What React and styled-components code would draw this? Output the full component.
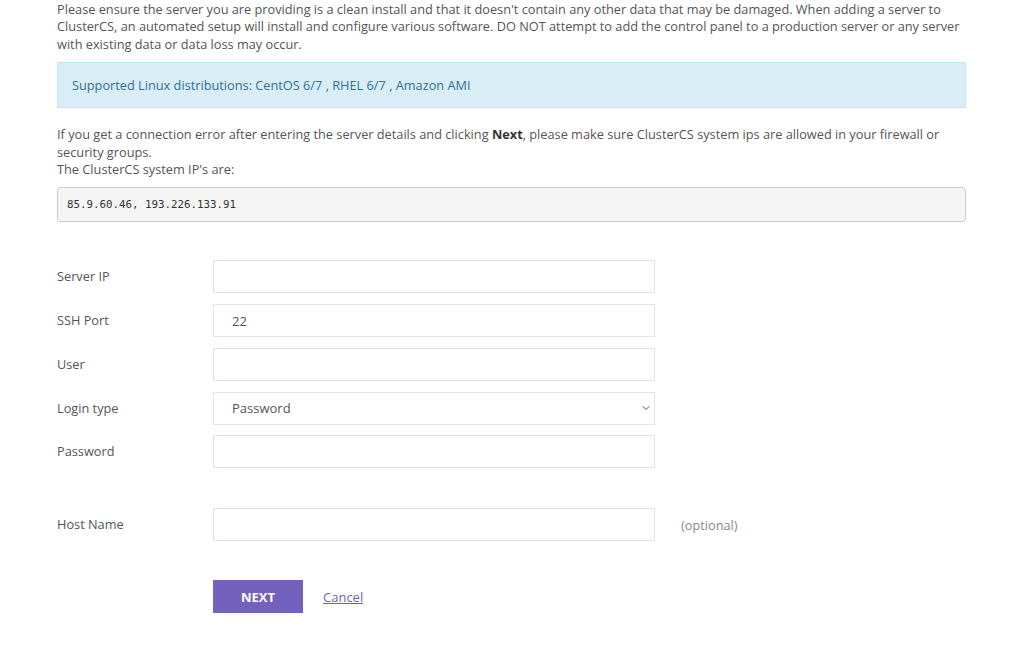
import React from 'react'
import styled, { createGlobalStyle } from 'styled-components'
import { ChevronDown } from 'lucide-react'

const Global = createGlobalStyle`
	body {
		margin: 0;
		background: #fff;
		font-family: "Open Sans", "Liberation Sans", sans-serif;
		font-size: 12.75px;
		color: #555;
	}
`

const Page = styled.div`
	width: 909px;
	padding: 0 0 0 57px;
`

const Text = styled.p`
	margin: 0 0 ${props => props.mb || 0}px 0;
	line-height: 17.4px;
	padding-top: ${props => props.pt || 0}px;
	b {
		color: #333;
		font-weight: 700;
	}
`

const Alert = styled.div`
	box-sizing: border-box;
	height: 46px;
	padding: 0 14px;
	display: flex;
	align-items: center;
	background: #d9edf7;
	border: 1px solid #bce8f1;
	color: #31708f;
	margin-bottom: 18px;
`

const Pre = styled.pre`
	box-sizing: border-box;
	height: 35px;
	margin: 0 0 38px 0;
	padding: 0 9px;
	display: flex;
	align-items: center;
	background: #f5f5f5;
	border: 1px solid #ccc;
	border-radius: 4px;
	font-family: "DejaVu Sans Mono", "Liberation Mono", monospace;
	font-size: 10.8px;
	color: #333;
`

const Form = styled.form`
	display: flex;
	flex-direction: column;
	gap: 10.75px;
`

const Row = styled.div`
	display: flex;
	align-items: center;
	margin-top: ${props => props.mt || 0}px;
`

const Label = styled.label`
	width: 156px;
	flex-shrink: 0;
	color: #555;
	margin-top: -1px;
`

const Input = styled.input`
	box-sizing: border-box;
	width: 442px;
	height: 33px;
	padding: 0 18px;
	border: 1px solid #e3e3ef;
	border-radius: 0;
	font-family: inherit;
	font-size: 13px;
	color: #555;
	outline: none;
`

const SelectWrap = styled.div`
	position: relative;
	width: 442px;
	height: 33px;
`

const Select = styled.select`
	box-sizing: border-box;
	width: 100%;
	height: 33px;
	padding: 0 18px;
	appearance: none;
	background: #fff;
	border: 1px solid #e3e3ef;
	border-radius: 0;
	font-family: inherit;
	font-size: 13px;
	color: #555;
	outline: none;
`

const Chevron = styled(ChevronDown)`
	position: absolute;
	right: 3px;
	top: 10px;
	pointer-events: none;
	color: #555;
`

const Hint = styled.span`
	margin-left: 26px;
	color: #888;
`

const Actions = styled.div`
	display: flex;
	align-items: center;
	gap: 20px;
	margin: 39px 0 0 156px;
`

const Button = styled.button`
	width: 90px;
	height: 33px;
	border: none;
	border-radius: 0;
	background: #7461bd;
	color: #fff;
	font-family: inherit;
	font-weight: 700;
	font-size: 13px;
`

const Cancel = styled.a`
	color: #6f5fc0;
	text-decoration: underline;
	font-size: 13px;
	cursor: pointer;
`

export default function App() {
	return (
		<Page>
			<Global />
			<Text mb={9} pt={1}>
				Please ensure the server you are providing is a clean install and that it doesn't contain any other data that may be damaged. When adding a server to ClusterCS, an automated setup will install and configure various software. DO NOT attempt to add the control panel to a production server or any server with existing data or data loss may occur.
			</Text>
			<Alert>Supported Linux distributions: CentOS 6/7 , RHEL 6/7 , Amazon AMI</Alert>
			<Text mb={9}>
				If you get a connection error after entering the server details and clicking <b>Next</b>, please make sure ClusterCS system ips are allowed in your firewall or security groups.<br />
				The ClusterCS system IP's are:
			</Text>
			<Pre>85.9.60.46, 193.226.133.91</Pre>
			<Form onSubmit={e => e.preventDefault()}>
				<Row>
					<Label>Server IP</Label>
					<Input type="text" />
				</Row>
				<Row>
					<Label>SSH Port</Label>
					<Input type="text" defaultValue="22" />
				</Row>
				<Row>
					<Label>User</Label>
					<Input type="text" />
				</Row>
				<Row>
					<Label>Login type</Label>
					<SelectWrap>
						<Select defaultValue="password">
							<option value="password">Password</option>
							<option value="key">Private key</option>
						</Select>
						<Chevron size={12} strokeWidth={2} />
					</SelectWrap>
				</Row>
				<Row>
					<Label>Password</Label>
					<Input type="password" />
				</Row>
				<Row mt={29}>
					<Label>Host Name</Label>
					<Input type="text" />
					<Hint>(optional)</Hint>
				</Row>
			</Form>
			<Actions>
				<Button type="button">NEXT</Button>
				<Cancel>Cancel</Cancel>
			</Actions>
		</Page>
	)
}
